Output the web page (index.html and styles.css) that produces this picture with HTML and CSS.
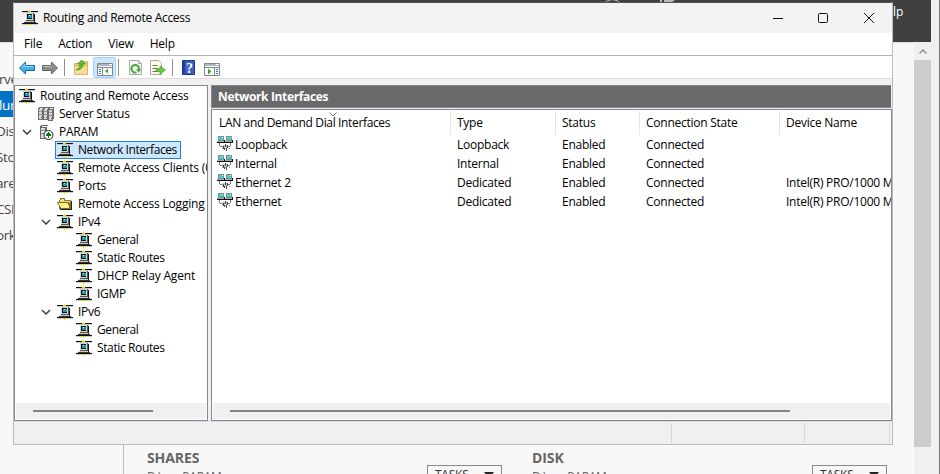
FILE: index.html
```
<!DOCTYPE html>
<html lang="en">
<head>
<meta charset="utf-8">
<title>Routing and Remote Access</title>
<link rel="stylesheet" href="styles.css">
</head>
<body>
<svg class="defs" width="0" height="0" shape-rendering="crispEdges">
  <symbol id="net" viewBox="0 0 16 16">
    <path d="M0 1h16v1H0zM0 13h16v1H0z" fill="#111"/>
    <path d="M0 2h16v1H0zM0 14h16v1H0z" fill="#ccc"/>
    <path d="M6 1h3v1H6zM7 0h1v2H7zM6 14h3v1H6zM7 15h1v1H7z" fill="#f4e000"/>
    <path d="M4 3h8v8H4z" fill="#555"/><path d="M4 3h7v7H4z" fill="#d2d2d2"/><path d="M12 4h1v7h-1z" fill="#111"/>
    <path d="M5 4h5v5H5z" fill="#111"/><path d="M6 5h4v3H6z" fill="#16a0a0"/><path d="M7 5h1v1H7z" fill="#8ff"/>
    <path d="M3 11h9v1H3z" fill="#c8c8c8"/><path d="M2 12h12v1H2zM12 11h1v1h-1z" fill="#333"/>
  </symbol>
  <symbol id="link" viewBox="0 0 16 16">
    <path d="M1 0h6v5H1zM9 0h6v5H9z" fill="#888"/><path d="M2 1h4v3H2zM10 1h4v3h-4z" fill="#28dcdc"/>
    <path d="M5 1h1v1H5zM13 1h1v1h-1z" fill="#fff"/>
    <path d="M0 5h7v1H0zM8 5h7v1H8z" fill="#aaa"/><path d="M0 6h16v1H0zM15 4h1v3h-1zM7 4h1v3H7z" fill="#111"/>
    <path d="M2 7h1v3H2zM3 10h2v1H3zM13 7h1v3h-1zM11 10h2v1h-2zM12 12h1v1h-1z" fill="#777"/>
    <path d="M5 9h5v4H5z" fill="#c4c4c4"/><path d="M6 10h1v3H6zM8 8h1v3H8zM7 12h1v2H7zM9 12h1v3H9zM10 9h1v3h-1z" fill="#444"/>
  </symbol>
  <symbol id="servers" viewBox="0 0 16 16">
    <path d="M0 2h1V1h5v13H0zM5 2h1V1h5v13H5zM10 2h1V1h5v12h-1v2h-5z" fill="#6c6c6c"/>
    <path d="M1 3h3v10H1zM6 3h3v10H6zM11 4h3v10h-3z" fill="#d4d4d4"/>
    <path d="M2 2h3v1H2zM7 2h3v1H7zM12 2h3v1h-3z" fill="#eee"/>
    <path d="M1 5h3v1H1zM6 5h3v1H6zM11 6h3v1h-3zM1 8h3v1H1zM6 8h3v1H6zM11 9h3v1h-3z" fill="#999"/>
    <path d="M3 11h1v1H3zM8 11h1v1H8zM13 12h1v1h-1z" fill="#b33"/>
  </symbol>
  <symbol id="server" viewBox="0 0 16 16">
    <path d="M2 2h1V1h7v1H9v13H2z" fill="#666"/><path d="M3 4h4v10H3z" fill="#ddd"/>
    <path d="M4 2h5v1H4z" fill="#eee"/><path d="M3 6h4v1H3zM3 9h4v1H3z" fill="#888"/>
    <circle cx="10.500" cy="11" r="4.500" fill="#fff" stroke="#222" shape-rendering="auto"/>
    <path d="M10 8h1v1h1v1h1v2h-2v2h-1v-2H8v-2h1V9h1z" fill="#008000"/>
  </symbol>
  <symbol id="folder" viewBox="0 0 16 16">
    <path d="M2 4h1V2h5v2h6v9H2z" fill="#8a7d32"/><path d="M3 4h1V3h3v2h6v7H3z" fill="#f3df70"/>
    <path d="M0 6h12v1h1v6H3v-2H2V9H1z" fill="#776d26"/><path d="M1 7h10v2h1v3H4v-1H3V9H2z" fill="#ffec82"/><path d="M3 13h12v1H3zM14 5h1v9h-1z" fill="#222"/>
  </symbol>
  <symbol id="chev" viewBox="0 0 10 6"><path d="M1 1l4 4 4-4" fill="none" stroke="#404040" stroke-width="1.5" shape-rendering="auto"/></symbol>
</svg>

<div class="manager">
  <div class="topbar"><svg class="topglyphs" width="90" height="4" viewBox="0 0 90 4"><path d="M3 4Q12-5 22 4M37 3h2" fill="none" stroke="#bbb"/><path d="M60 0h2v3h-2zM64 0h11l-3 2h-8z" fill="#bbb"/></svg><span class="help">Help</span></div>
  <div class="body">
    <div class="side">
      <div><span>rve</span></div><div class="on"><span>lur</span></div><div><span>Dis</span></div><div><span>Sto</span></div><div><span>are</span></div><div><span>CSI</span></div><div><span>ork</span></div>
    </div>
    <div class="tiles">
      <section class="tile"><div class="thead">SHARES</div><div class="sub">D:\ on PARAM</div><div class="tasks"><span>TASKS</span><i></i></div></section>
      <section class="tile"><div class="thead">DISK</div><div class="sub">D:\ on PARAM</div><div class="tasks"><span>TASKS</span><i></i></div></section>
    </div>
  </div>
  <div class="vscroll"><svg width="17" height="18" viewBox="0 0 17 18"><path d="M5.500 11.500l3.500-3.500 3.500 3.500" fill="none" stroke="#888" stroke-width="1.300"/></svg><div class="thumb"></div></div>
</div>

<div class="window">
  <header class="title">
    <svg class="ic"><use href="#net"/></svg><span class="t">Routing and Remote Access</span>
    <svg class="ctl" width="102" height="12" viewBox="0 0 102 12" fill="none" stroke="#111"><path d="M0 6.500h10"/><rect x="45.500" y="1.500" width="9" height="9" rx="1"/><path d="M91 1l10 10M101 1L91 11"/></svg>
  </header>
  <nav class="menu"><span>File</span><span>Action</span><span>View</span><span>Help</span></nav>
  <div class="tools">
    <svg width="184" height="22" viewBox="0 0 184 22">
      <path d="M5.500 12l6-6v3.500h9v5h-9V18z" fill="#43aee8" stroke="#1768a8"/><path d="M8 11.500l3-3v2h8" fill="none" stroke="#a4e2ff"/>
      <path d="M43.500 12l-6-6v3.500h-9v5h9V18z" fill="#8c8c8c" stroke="#666"/><path d="M29.500 10.500h8" stroke="#c4c4c4"/>
      <path d="M50.500 3v17M104.500 3v17M158.500 3v17" stroke="#909090"/>
      <path d="M60.500 7.500h6l1-2h6v13h-13z" fill="#f2cf78" stroke="#d9b566"/><path d="M60.500 18.500v-9h13v9z" fill="#f8dc91" stroke="#d9b566"/>
      <path d="M62 14q4-1 4-6h-2.500l4-4 4 4H69q0 6-7 6z" fill="#55bc31" stroke="#2e8c22" stroke-width=".6"/>
      <rect x="79.500" y="1.500" width="22" height="20" rx="2" fill="#cce8ff" stroke="#99d1ff"/>
      <path d="M83.500 7.500h15v12h-15z" fill="#fff" stroke="#7e8790"/><path d="M84 8h14v2H84z" fill="#adb6be"/><path d="M84 11.500h14M88.500 12v7" stroke="#7e8790"/><path d="M85 13.500h2M85 15.500h2M85 17.500h2" stroke="#3b7bbb"/><path d="M95 8.500h3" stroke="#fff"/>
      <path d="M94 12.500v5L91 15z" fill="#38a925"/>
      <path d="M115.500 4.500h9l3 3v11h-12z" fill="#fafafa" stroke="#aaa"/><path d="M124.500 4.500v3h3" fill="none" stroke="#aaa"/><path d="M122.500 16.300a3.800 3.800 0 1 1 2.500-3.300" fill="none" stroke="#43ad36" stroke-width="2"/><path d="M122 13h5l-2 4z" fill="#43ad36"/>
      <path d="M136.500 4.500h8l3 3v11h-11z" fill="#fff9df" stroke="#aaa"/><path d="M138.500 9.500h5M138.500 12.500h5M138.500 15.500h6" stroke="#777"/><path d="M142 12.500h4V10l5.500 4-5.500 4v-2.500h-4z" fill="#66c549" stroke="#3b9d2c" stroke-width=".6"/>
      <path d="M168.500 4.500h12v14h-12z" fill="#3f61c8" stroke="#1c3584"/><path d="M170 4v15" stroke="#203e9b" stroke-width="2"/><text x="172" y="16.500" class="q">?</text>
    </svg>
    <svg class="last" width="16" height="13" viewBox="0 0 16 13"><path d="M.5.5h15v12H.5z" fill="#fff" stroke="#7e8790"/><path d="M1 1h14v2H1z" fill="#adb6be"/><path d="M1 4.500h14M10.500 5v7" stroke="#7e8790"/><path d="M12 6.500h2M12 8.500h2M12 10.500h2" stroke="#3b7bbb"/><path d="M12 1.500h3" stroke="#fff"/><path d="M4 5.500v6l3.500-3z" fill="#38a925"/></svg>
  </div>
  <div class="work">
    <aside class="tree">
      <div class="nodes">
        <div class="node root"><svg class="ic"><use href="#net"/></svg><span>Routing and Remote Access</span></div>
        <div class="node l1"><i></i><svg class="ic"><use href="#servers"/></svg><span>Server Status</span></div>
        <div class="node l1"><i><svg class="chev"><use href="#chev"/></svg></i><svg class="ic"><use href="#server"/></svg><span>PARAM</span></div>
        <div class="node l2"><i></i><b class="sel"><svg class="ic"><use href="#net"/></svg><span>Network Interfaces</span></b></div>
        <div class="node l2"><i></i><svg class="ic"><use href="#net"/></svg><span class="loose">Remote Access Clients (0)</span></div>
        <div class="node l2"><i></i><svg class="ic"><use href="#net"/></svg><span>Ports</span></div>
        <div class="node l2"><i></i><svg class="ic"><use href="#folder"/></svg><span class="loose">Remote Access Logging</span></div>
        <div class="node l2"><i><svg class="chev"><use href="#chev"/></svg></i><svg class="ic"><use href="#net"/></svg><span>IPv4</span></div>
        <div class="node l3"><svg class="ic"><use href="#net"/></svg><span class="tight">General</span></div>
        <div class="node l3"><svg class="ic"><use href="#net"/></svg><span class="tight">Static Routes</span></div>
        <div class="node l3"><svg class="ic"><use href="#net"/></svg><span class="loose">DHCP Relay Agent</span></div>
        <div class="node l3"><svg class="ic"><use href="#net"/></svg><span>IGMP</span></div>
        <div class="node l2"><i><svg class="chev"><use href="#chev"/></svg></i><svg class="ic"><use href="#net"/></svg><span>IPv6</span></div>
        <div class="node l3"><svg class="ic"><use href="#net"/></svg><span class="tight">General</span></div>
        <div class="node l3"><svg class="ic"><use href="#net"/></svg><span class="tight">Static Routes</span></div>
      </div>
      <div class="hscroll"><div></div></div>
    </aside>
    <main class="detail">
      <h1>Network Interfaces</h1>
      <div class="list">
        <div class="rows">
          <div class="row head"><span>LAN and Demand Dial Interfaces</span><span>Type</span><span>Status</span><span>Connection State</span><span>Device Name</span><svg class="sort" width="8" height="5" viewBox="0 0 8 5"><path d="M.5.500L4 4 7.500.500" fill="none" stroke="#777"/></svg></div>
          <div class="row"><span><svg class="ic"><use href="#link"/></svg>Loopback</span><span>Loopback</span><span>Enabled</span><span>Connected</span><span></span></div>
          <div class="row"><span><svg class="ic"><use href="#link"/></svg>Internal</span><span>Internal</span><span>Enabled</span><span>Connected</span><span></span></div>
          <div class="row"><span><svg class="ic"><use href="#link"/></svg>Ethernet 2</span><span>Dedicated</span><span>Enabled</span><span>Connected</span><span>Intel(R) PRO/1000 MT</span></div>
          <div class="row"><span><svg class="ic"><use href="#link"/></svg>Ethernet</span><span>Dedicated</span><span>Enabled</span><span>Connected</span><span>Intel(R) PRO/1000 MT</span></div>
        </div>
        <div class="hscroll wide"><div></div></div>
      </div>
    </main>
  </div>
  <footer class="status"><span></span><span></span><span></span></footer>
</div>
</body>
</html>
```
FILE: styles.css
```
* { box-sizing: border-box; }
body { margin: 0; width: 940px; height: 474px; overflow: hidden; position: relative; background: #f8f8f8; font: 12px/18px "Open Sans", sans-serif; color: #000; letter-spacing: -0.25px; }
svg { display: block; flex: none; }
.defs { position: absolute; }
.ic { width: 16px; height: 16px; }
.manager { display: grid; grid-template: 42px 432px / 914px 17px; width: 940px; height: 474px; background: #f0f0f0; border-right: 1px solid #777; }
.topbar { grid-column: 1 / 3; background: #404040; color: #fff; display: flex; justify-content: flex-end; padding: 3px 28px 0 0; position: relative; }
.topglyphs { position: absolute; left: 600px; top: 0; }
.body { background: #f8f8f8; display: flex; border-top: 1px solid #ddd; overflow: hidden; }
.side { width: 124px; flex: none; border-right: 1px solid #bbb; padding-top: 22px; font-size: 13.5px; line-height: 28px; color: #444; }
.side div { height: 26px; white-space: nowrap; }
.side span { margin-left: -4px; letter-spacing: -0.4px; }
.side div:first-child span, .side .on span { margin-left: -1px; }
.side .on { background: #0073c6; color: #fff; }
.tiles { display: flex; flex: none; padding: 406px 0 0 23px; color: #666; }
.tile { width: 385px; flex: none; display: grid; grid-template-columns: 280px 75px; grid-template-rows: 16px 18px; }
.thead { font-size: 14px; font-weight: 700; line-height: 18px; letter-spacing: -0.1px; }
.sub { grid-row: 2; letter-spacing: -0.25px; line-height: 23px; }
.tasks { grid-row: 2; border: 1px solid #888; color: #333; display: flex; justify-content: space-between; padding: 0 7px; line-height: 18px; }
.tasks i { margin-top: 6px; border: 5px solid transparent; border-top-color: #222; border-top-width: 6px; height: 0; }
.vscroll { background: #f0f0f0; }
.thumb { height: 387px; background: #cdcdcd; }
.window { position: absolute; left: 13px; top: 2px; width: 880px; height: 443px; border: 1px solid #bbb; border-top-color: #555; background: #f0f0f0; display: grid; grid-template-rows: 30px 23px 23px 6px 336px 23px; }
.title { background: #f3f3f3; display: flex; align-items: center; padding: 0 17px 0 8px; }
.t { margin-left: 5px; letter-spacing: -0.3px; }
.ctl { margin-left: auto; }
.menu { background: #fff; border-bottom: 1px solid #b4b4b4; display: flex; padding: 2px 10px 0; gap: 16px; letter-spacing: -0.2px; }
.tools { background: #fff; border-bottom: 1px solid #ddd; display: flex; }
.tools .last { margin: 7px 0 0 6px; }
.q { font: bold 14px "Liberation Serif", serif; fill: #fff; }
.work { grid-row: 5; display: grid; grid-template-columns: 194px 681px; gap: 3px; }
.tree { border: 1px solid #828790; background: #fff; display: flex; flex-direction: column; min-width: 0; overflow: hidden; }
.nodes { padding: 1px 1px 0 0; flex: 1; overflow: hidden; }
.node { height: 18px; display: flex; align-items: center; white-space: nowrap; }
.node span { margin-left: 5px; }
.node i { width: 19px; flex: none; }
.node .loose { letter-spacing: -0.18px; }
.node .tight { letter-spacing: -0.38px; }
.root, .l1 { padding-left: 4px; }
.l2 { padding-left: 23px; }
.l3 { padding-left: 61px; }
.chev { width: 10px; height: 6px; margin-left: 3px; }
.sel { display: flex; align-items: center; width: 126px; height: 18px; margin-left: -2px; padding-left: 1px; background: #cce8ff; border: 1px solid #2683d9; font-weight: 400; letter-spacing: -0.42px; }
.hscroll { height: 16px; margin: 0 1px 1px; background: #f0f0f0; padding: 7px 0 0 17px; }
.hscroll div { width: 120px; height: 2px; background: #858585; }
.wide div { width: 560px; }
.detail { display: grid; grid-template-rows: 23px 312px; gap: 1px; min-width: 0; }
h1 { margin: 0 1px 0 0; background: #696969; border: 1px solid #828790; border-right: 0; color: #fff; font-size: 12px; line-height: 22px; padding-left: 6px; letter-spacing: -0.35px; }
.list { border: 1px solid #828790; background: #fff; display: flex; flex-direction: column; min-width: 0; }
.rows { flex: 1; padding-top: 1px; overflow: hidden; }
.row { display: grid; grid-template-columns: 239px 105px 84px 140px 111px; height: 19px; line-height: 20px; }
.row span { padding-left: 6px; display: flex; white-space: nowrap; overflow: hidden; }
.row .ic { margin: 1px 2px 0 -1px; }
.head { height: 24px; line-height: 24px; position: relative; }
.head span { border-right: 1px solid #e5e5e5; }
.head span:first-child { padding-left: 7px; letter-spacing: -0.35px; }
.head span:nth-child(5) { border: 0; }
.sort { position: absolute; left: 117px; top: 1px; }
.status { grid-row: 6; display: grid; grid-template-columns: 658px 133px 85px; border-top: 1px solid #d7dbe0; padding: 1px 0; }
.status span { border-right: 1px solid #d7d7d7; }
```
